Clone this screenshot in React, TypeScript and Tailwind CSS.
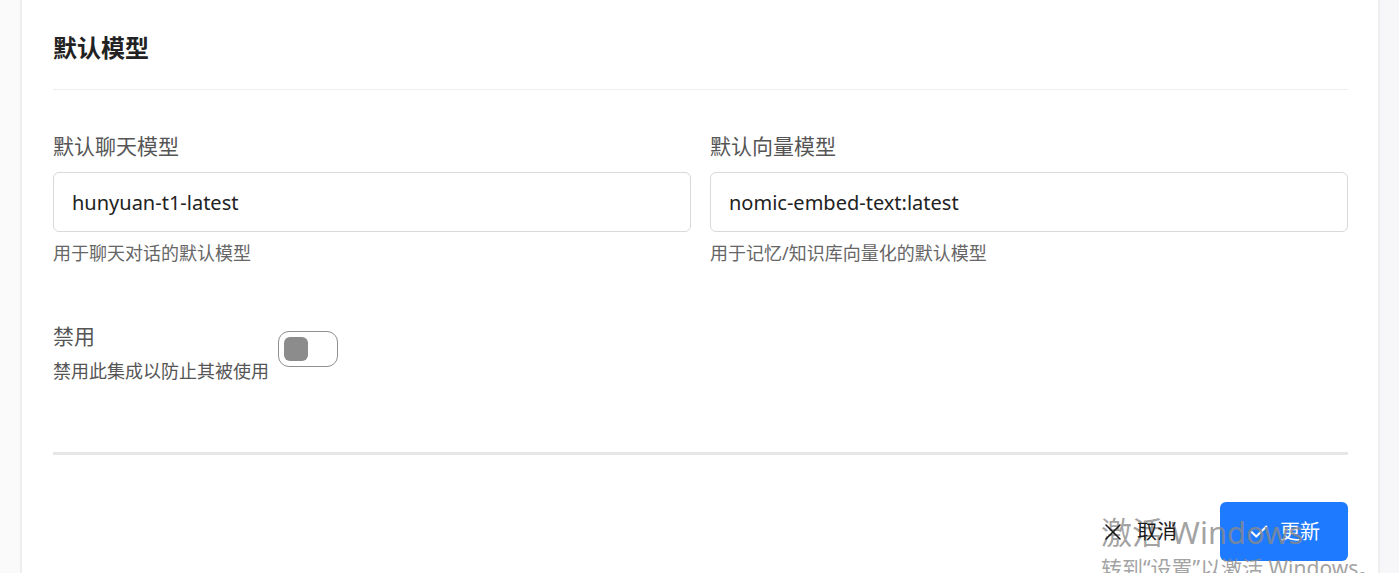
import React, { useState } from 'react';
import { X, Check } from 'lucide-react';

const font = { fontFamily: '"Noto Sans", "Noto Sans CJK SC", sans-serif' };

interface FieldProps {
  label: string;
  value: string;
  hint: string;
}

const Field: React.FC<FieldProps> = ({ label, value, hint }) => (
  <div className="flex flex-col">
    <label className="text-[21px] leading-[28px] text-[#555555]">{label}</label>
    <input
      readOnly
      value={value}
      className="mt-3 h-[60px] w-full rounded-[6px] border border-[#d9d9d9] bg-white px-[18px] text-[20px] text-[#222222] outline-none"
    />
    <p className="mt-[9px] text-[18px] leading-[24px] text-[#666666]">{hint}</p>
  </div>
);

export default function App() {
  const [disabled, setDisabled] = useState(false);

  return (
    <div className="relative flex h-[573px] w-full overflow-hidden bg-[#f8f8fa]" style={font}>
      <div className="w-[22px] shrink-0 border-r-2 border-[#eeeeee] bg-[#fafafa]" />

      {/* Card */}
      <div className="flex w-[1356px] shrink-0 flex-col bg-white pl-[31px] pr-[30px] pt-8">
        <h2 className="text-[24px] font-bold leading-8 text-[#222222]">默认模型</h2>
        <div className="mt-[25px] h-px bg-[#eeeeee]" />

        <div className="mt-[42px] grid grid-cols-2 gap-x-[19px]">
          <Field label="默认聊天模型" value="hunyuan-t1-latest" hint="用于聊天对话的默认模型" />
          <Field label="默认向量模型" value="nomic-embed-text:latest" hint="用于记忆/知识库向量化的默认模型" />
        </div>

        <div className="mt-[57px] flex items-start gap-[9px]">
          <div className="flex flex-col">
            <span className="text-[21px] leading-[28px] text-[#555555]">禁用</span>
            <span className="mt-[9px] text-[18px] leading-[24px] text-[#555555]">禁用此集成以防止其被使用</span>
          </div>
          <button
            onClick={() => setDisabled(!disabled)}
            className={`mt-[9px] flex h-[36px] w-[60px] items-center rounded-[11px] border border-[#8f8f8f] px-[5px] ${
              disabled ? 'justify-end bg-[#1e7bff]' : 'justify-start bg-white'
            }`}
          >
            <span className={`h-[24px] w-[24px] rounded-[6px] ${disabled ? 'bg-white' : 'bg-[#8c8c8c]'}`} />
          </button>
        </div>

        <div className="mt-[69px] h-[3px] bg-[#e7e7e9]" />

        <div className="mt-[47px] flex items-center justify-end gap-[43px]">
          <button className="relative z-10 flex items-center gap-[10px] text-[20px] text-[#1a1a1a]">
            <X size={28} strokeWidth={1.3} />
            取消
          </button>
          <button className="flex h-[59px] w-[128px] items-center justify-center gap-[10px] rounded-[6px] bg-[#1e7bff] text-[20px] text-white">
            <Check size={22} strokeWidth={2.2} />
            更新
          </button>
        </div>
      </div>

      <div className="flex-1 border-l-2 border-[#eeeeee] bg-[#f7f7f9]" />

      {/* OS watermark overlay */}
      <div className="pointer-events-none absolute left-[1101px] top-[511px] flex flex-col text-[#8a8a8a]/80">
        <span className="text-[31px] leading-[42px]">激活 Windows</span>
        <span className="mt-[2px] text-[21px] leading-[26px]">转到“设置”以激活 Windows。</span>
      </div>
    </div>
  );
}
